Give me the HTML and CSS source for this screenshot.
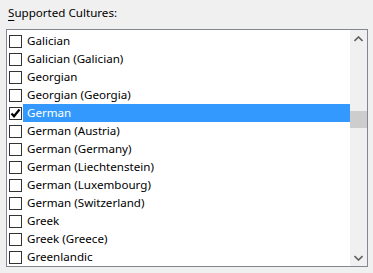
FILE: index.html
```html
<!DOCTYPE html>
<html lang="en">

<head>
    <meta charset="UTF-8">
    <title>Supported Cultures</title>
    <link rel="stylesheet" href="styles.css">
</head>

<body>
    <div class="label"><u>S</u>upported Cultures:</div>
    <div class="box">
        <div class="list">
            <div class="row"><span class="check"></span><span class="name">Galician</span></div>
            <div class="row"><span class="check"></span><span class="name">Galician (Galician)</span></div>
            <div class="row"><span class="check"></span><span class="name">Georgian</span></div>
            <div class="row"><span class="check"></span><span class="name">Georgian (Georgia)</span></div>
            <div class="row selected">
                <span class="check">
                    <svg width="11" height="11" viewBox="0 0 11 11"><path d="M1.5 5.5 L4 8.3 L9.5 1.5" fill="none" stroke="#000" stroke-width="2.2"/></svg>
                </span>
                <span class="name">German</span>
            </div>
            <div class="row"><span class="check"></span><span class="name">German (Austria)</span></div>
            <div class="row"><span class="check"></span><span class="name">German (Germany)</span></div>
            <div class="row"><span class="check"></span><span class="name">German (Liechtenstein)</span></div>
            <div class="row"><span class="check"></span><span class="name">German (Luxembourg)</span></div>
            <div class="row"><span class="check"></span><span class="name">German (Switzerland)</span></div>
            <div class="row"><span class="check"></span><span class="name">Greek</span></div>
            <div class="row"><span class="check"></span><span class="name">Greek (Greece)</span></div>
            <div class="row"><span class="check"></span><span class="name">Greenlandic</span></div>
        </div>
        <div class="scroll">
            <div class="arrow">
                <svg width="9" height="6" viewBox="0 0 9 6"><path d="M0.5 5 L4.5 1 L8.5 5" fill="none" stroke="#606060" stroke-width="1.6"/></svg>
            </div>
            <div class="track">
                <div class="thumb"></div>
            </div>
            <div class="arrow">
                <svg width="9" height="6" viewBox="0 0 9 6"><path d="M0.5 1 L4.5 5 L8.5 1" fill="none" stroke="#606060" stroke-width="1.6"/></svg>
            </div>
        </div>
    </div>
</body>

</html>
```

FILE: styles.css
```css
body {
    margin: 0;
    background-color: #f0f0f0;
    font-family: "Noto Sans", "Open Sans", sans-serif;
    color: #000;
}

.label {
    padding: 5px 0 0 8px;
    height: 24px;
    font-size: 11.6px;
    line-height: 16px;
}

.label u {
    text-decoration-thickness: 1px;
    text-underline-offset: 3px;
}

.box {
    margin-left: 6px;
    width: 362px;
    height: 238px;
    box-sizing: border-box;
    border: 1px solid #828790;
    background-color: #fff;
    display: flex;
}

.list {
    flex: 1;
    padding-top: 2px;
    overflow: hidden;
}

.row {
    height: 18px;
    display: flex;
    align-items: center;
    padding-left: 2px;
    font-size: 11.6px;
}

.check {
    width: 13px;
    height: 13px;
    box-sizing: border-box;
    border: 1px solid #333;
    background-color: #fff;
    margin-right: 1px;
    display: flex;
    align-items: center;
    justify-content: center;
}

.check svg {
    display: block;
}

.name {
    flex: 1;
    height: 18px;
    line-height: 17px;
    padding-left: 4px;
    white-space: nowrap;
}

.row.selected .name {
    background-color: #3399ff;
    color: #fff;
}

.scroll {
    width: 17px;
    background-color: #f0f0f0;
    display: flex;
    flex-direction: column;
}

.arrow {
    height: 17px;
    display: flex;
    align-items: center;
    justify-content: center;
}

.track {
    flex: 1;
}

.thumb {
    margin-top: 64px;
    height: 17px;
    background-color: #cdcdcd;
}
```
